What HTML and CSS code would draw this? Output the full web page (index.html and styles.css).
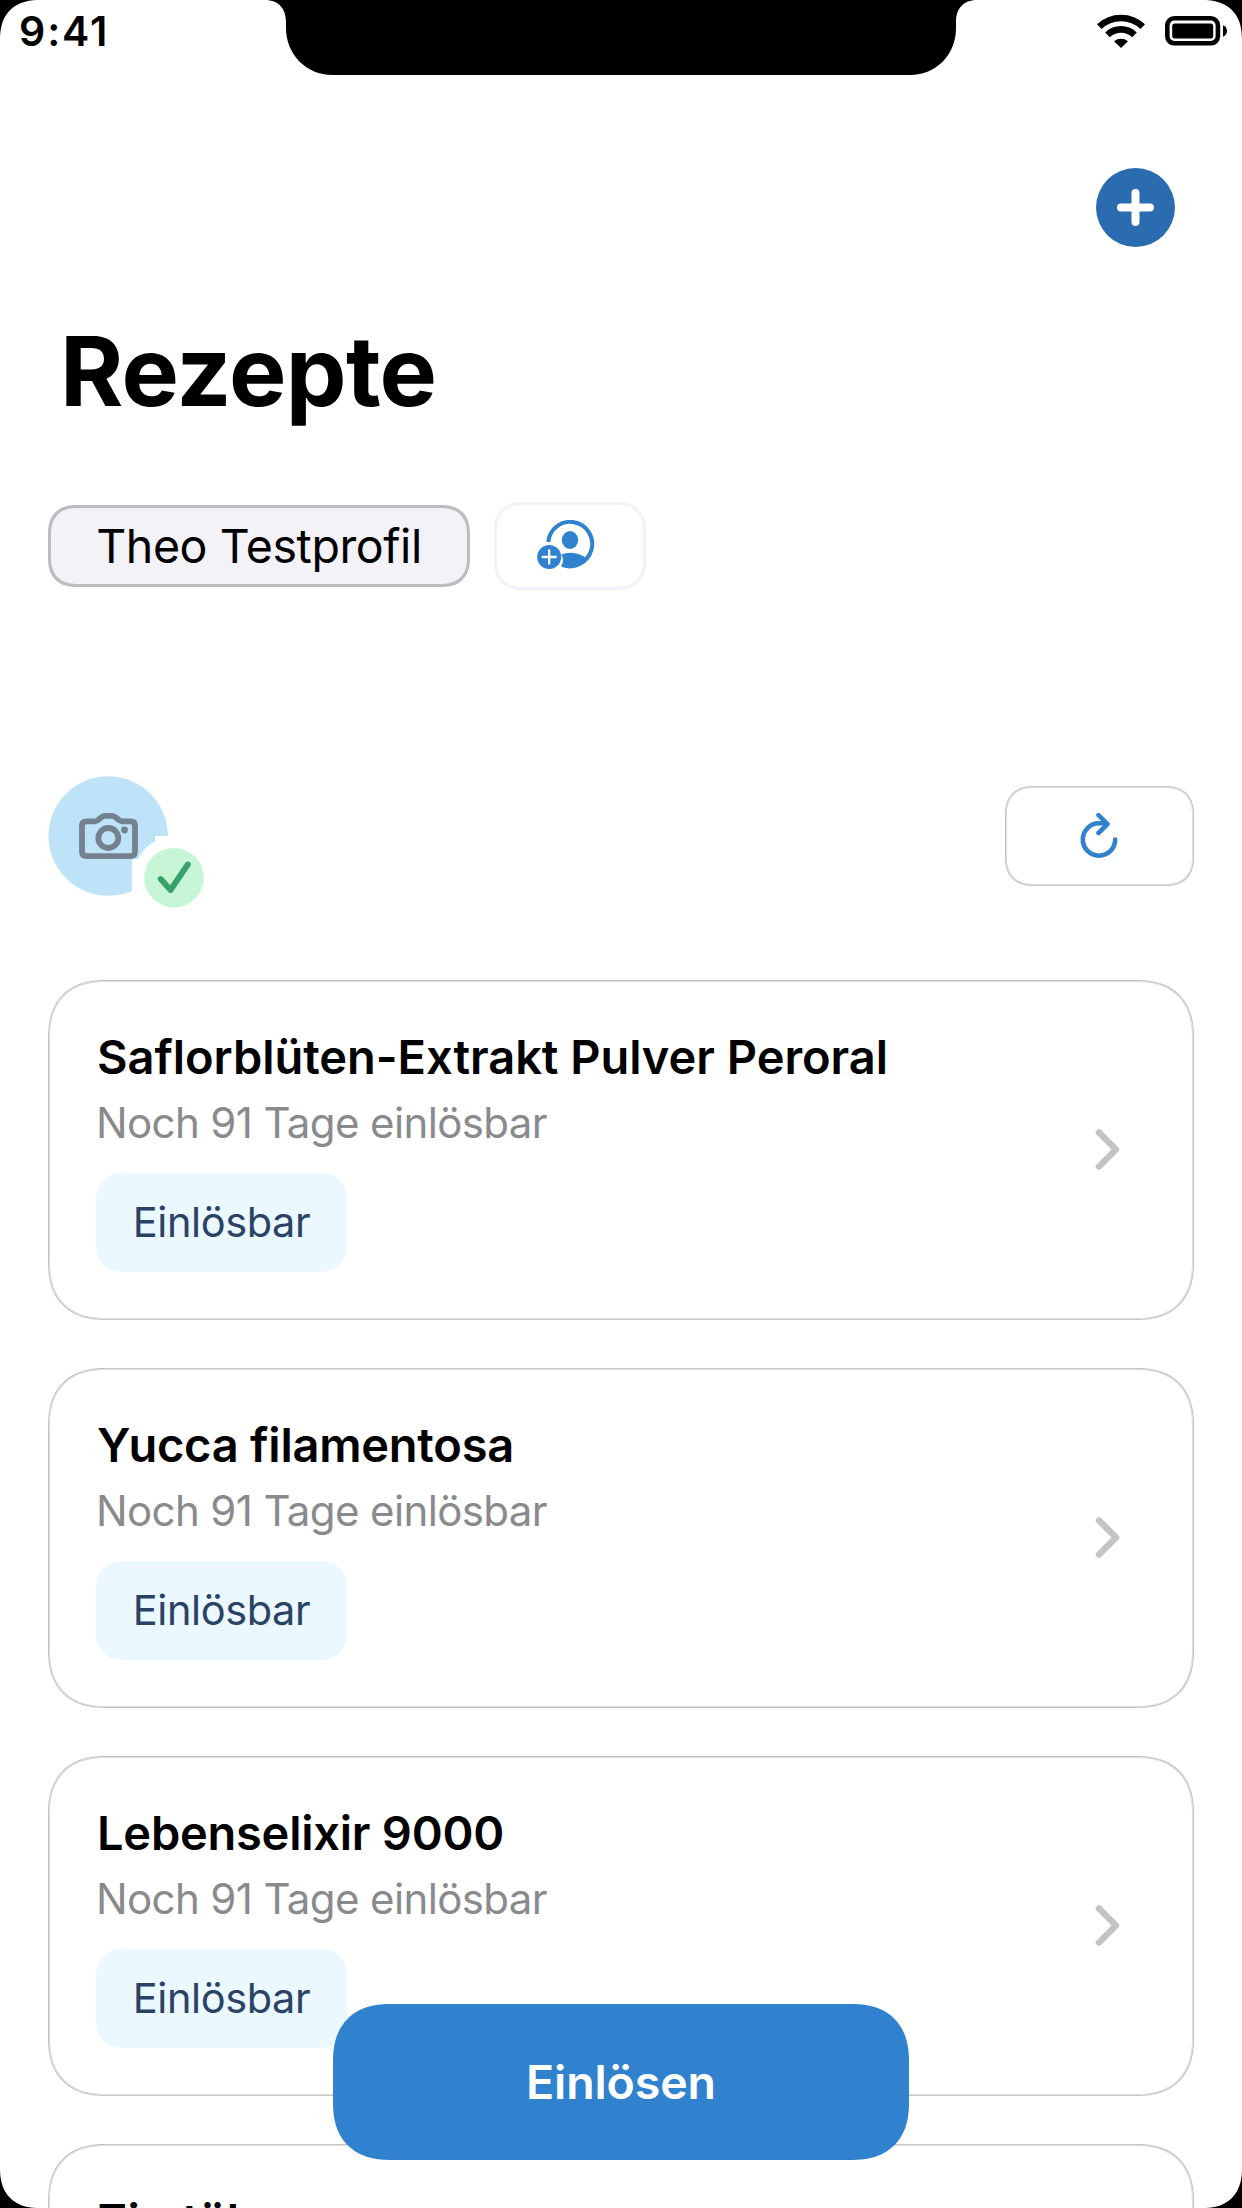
FILE: index.html
```html
<!DOCTYPE html>
<html lang="de">
<head>
<meta charset="utf-8">
<title>Rezepte</title>
<link rel="stylesheet" href="styles.css">
</head>
<body>
<div class="screen">
  <svg class="notch" width="712" height="75" viewBox="0 0 712 75"><path d="M0 0C14 0 21 9 21 22V28C21 55 42 75 67 75H645C671 75 691 55 691 28V22C691 9 698 0 712 0Z"/></svg>

  <header class="status">
    <span class="time">9:41</span>
    <div class="status-icons">
      <svg width="50" height="36" viewBox="0 0 50 36"><path d="M3.3 13.7A31.500 31.500 0 0 1 46.700 13.700M11.500 21.800A19.500 19.500 0 0 1 38.500 21.800" fill="none" stroke="#000" stroke-width="6.600"/><path d="M18 28.200A11.500 11.500 0 0 1 32 28.200L25 35Z"/></svg>
      <svg width="63" height="30" viewBox="0 0 63 30"><rect x="2.300" y="2.300" width="50.600" height="25" rx="7" fill="none" stroke="#000" stroke-width="4.600"/><rect x="7.200" y="7.500" width="41" height="15" rx="2.500"/><path d="M58 9.300C63.300 11 63.300 19 58 20.700Z"/></svg>
    </div>
  </header>

  <nav class="toolbar">
    <button class="add" aria-label="Hinzufügen"><svg width="79" height="79" viewBox="0 0 79 79"><circle cx="39.500" cy="39.500" r="39.500" fill="#2b6cb0"/><path d="M25 39.500H54M39.500 25V54" stroke="#fff" stroke-width="8" stroke-linecap="round"/></svg></button>
  </nav>

  <h1 class="heading">Rezepte</h1>

  <div class="profiles">
    <button class="profile">Theo Testprofil</button>
    <button class="profile-add" aria-label="Profil hinzufügen">
      <svg width="58" height="50" viewBox="0 0 58 50" fill="#3182ce"><path d="M11.300 22A22 22 0 1 1 25.600 44.500" fill="none" stroke="#3182ce" stroke-width="4"/><ellipse cx="33" cy="20" rx="8.200" ry="9"/><path d="M24.200 34.500Q33 31 43 34.400Q47 36 50 38.700C44.500 47.500 34 51 23.900 46.300C26.500 42.500 26.700 38.500 24.200 34.500Z"/><circle cx="12.200" cy="37" r="12"/><path d="M5.700 37H18.700M12.200 30.500V43.500" stroke="#fff" stroke-width="2.300" stroke-linecap="round"/></svg>
    </button>
  </div>

  <div class="sync">
    <svg width="162" height="140" viewBox="0 0 162 140"><circle cx="60.200" cy="60" r="59.700" fill="#bee3f8"/><g fill="none" stroke="#74818e" stroke-width="5.800" stroke-linejoin="round"><path d="M38.500 45.300H47C51 45.300 52.500 39.900 56.500 39.900H64.500C68.500 39.900 70 45.300 74 45.300H82.500Q87 45.300 87 49.800V75.500Q87 80.200 82.500 80.200H38.500Q34 80.200 34 75.500V49.800Q34 45.300 38.500 45.300Z"/><circle cx="60.300" cy="62" r="10"/></g><circle cx="76.500" cy="54" r="3.400" fill="#74818e"/><path d="M107 60H162V140H84V83H90Q96 71 107 65Z" fill="#fff"/><circle cx="126" cy="101.800" r="29.800" fill="#c6f6d5"/><path d="M112.700 103L122.500 114L139.800 88.500" fill="none" stroke="#38a169" stroke-width="5.800" stroke-linecap="round" stroke-linejoin="round"/></svg>
    <button class="refresh" aria-label="Aktualisieren"><svg width="38" height="48" viewBox="0 0 38 48" fill="none" stroke="#3182ce" stroke-width="4.600" stroke-linecap="round" stroke-linejoin="round"><path d="M35.200 27.500A16.200 16.200 0 1 1 19 11.300H26M18.500 3.200L27.500 12.100L18.500 21"/></svg></button>
  </div>

  <main class="list">
    <article class="card">
      <div><h2>Saflorblüten-Extrakt Pulver Peroral</h2><p>Noch 91 Tage einlösbar</p><span class="chip">Einlösbar</span></div>
      <svg class="chevron" width="28" height="48" viewBox="0 0 28 48"><path d="M4 6.500L21 23.500L4 40.500"/></svg>
    </article>
    <article class="card">
      <div><h2 class="snug">Yucca filamentosa</h2><p>Noch 91 Tage einlösbar</p><span class="chip">Einlösbar</span></div>
      <svg class="chevron" width="28" height="48" viewBox="0 0 28 48"><path d="M4 6.500L21 23.500L4 40.500"/></svg>
    </article>
    <article class="card">
      <div><h2 class="snug">Lebenselixir 9000</h2><p>Noch 91 Tage einlösbar</p><span class="chip">Einlösbar</span></div>
      <svg class="chevron" width="28" height="48" viewBox="0 0 28 48"><path d="M4 6.500L21 23.500L4 40.500"/></svg>
    </article>
    <article class="card">
      <div><h2>Zimtöl</h2></div>
    </article>
  </main>

  <button class="redeem">Einlösen</button>
</div>
</body>
</html>
```
FILE: styles.css
```css
* { box-sizing: border-box; margin: 0; padding: 0; }
html, body { height: 2208px; overflow: hidden; background: #000; }
body { font-family: Inter, "Liberation Sans", sans-serif; color: #000; }
button { font: inherit; color: inherit; border: 0; background: none; display: flex; align-items: center; justify-content: center; }
svg { display: block; flex: none; }

.screen { position: relative; width: 1242px; height: 2208px; overflow: hidden; background: #fff; border-radius: 32px; }
.notch { position: absolute; top: 0; left: 265px; }

.status { height: 62px; padding: 0 14px 0 19px; display: flex; align-items: center; justify-content: space-between; }
.time { font-size: 41px; font-weight: 600; letter-spacing: 1.900px; }
.status-icons { display: flex; align-items: center; gap: 19px; }

.toolbar { height: 249px; padding: 106px 67px 0; display: flex; justify-content: flex-end; align-items: flex-start; }
.add { width: 79px; height: 79px; }

.heading { height: 121px; padding-left: 60px; font-size: 96.5px; font-weight: 700; line-height: 121px; letter-spacing: -0.7px; }

.profiles { height: 88px; margin: 70px 48px 0; display: flex; align-items: center; gap: 24px; }
.profile { width: 422px; height: 82px; border: 3px solid #bcbcc1; border-radius: 26px; background: #f2f2f7; font-size: 46.500px; letter-spacing: -0.4px; }
.profile-add { width: 152px; height: 88px; padding-right: 8px; padding-bottom: 2px; border: 3px solid #f2f2f7; border-radius: 26px; }

.sync { height: 204px; margin: 186px 48px 0; display: flex; justify-content: space-between; align-items: flex-start; }
.refresh { width: 189px; height: 100px; margin-top: 10px; padding-right: 2px; border: 1px solid #c2c2c2; border-radius: 26px; box-shadow: inset 0 0 0 1px #dfdfdf; }

.list { padding: 0 48px; display: flex; flex-direction: column; gap: 48px; }
.card { height: 340px; padding: 47px; flex: none; display: flex; justify-content: space-between; align-items: center; border: 1px solid #c2c2c2; border-radius: 50px; box-shadow: inset 0 0 0 1px #dfdfdf; }
.card > div { align-self: flex-start; }
.card h2 { padding-left: 1px; font-size: 47px; font-weight: 600; line-height: 58px; letter-spacing: -0.04px; white-space: nowrap; }
.card .snug { letter-spacing: -0.240px; }
.card p { margin-top: 12px; font-size: 42px; line-height: 50px; letter-spacing: -0.620px; color: #8a8a8e; }
.chip { width: 251px; height: 99px; margin-top: 25px; padding-bottom: 2px; display: flex; align-items: center; justify-content: center; border-radius: 26px; background: #ebf8ff; color: #2a4365; font-size: 41.500px; letter-spacing: -0.4px; }
.chevron { margin-right: 23px; fill: none; stroke: #c4c4c6; stroke-width: 6.500; stroke-linecap: round; stroke-linejoin: round; }

.redeem { position: absolute; left: 333px; top: 2004px; width: 576px; height: 156px; border-radius: 50px; background: #3182ce; color: #fff; font-size: 46.500px; font-weight: 600; letter-spacing: -0.1px; }

@supports (corner-shape: superellipse(1.25)) {
  .screen, .profile, .profile-add, .refresh, .card, .chip, .redeem { corner-shape: superellipse(1.25); }
  .screen { border-radius: 40px; }
  .profile, .profile-add, .refresh, .chip { border-radius: 29px; }
  .card, .redeem { border-radius: 58px; }
}
```
